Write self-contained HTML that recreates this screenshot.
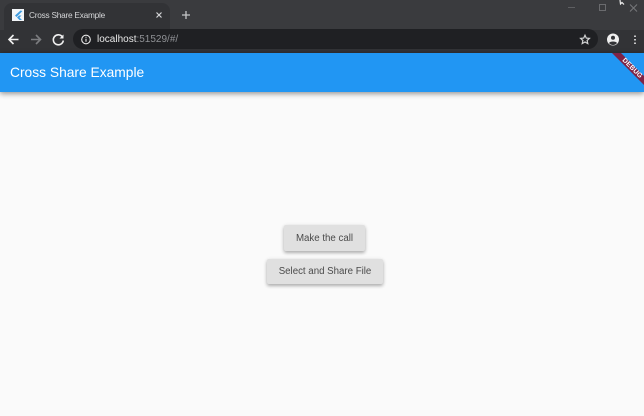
<!DOCTYPE html>
<html><head><meta charset="utf-8">
<style>
html,body{margin:0;padding:0;width:644px;height:416px;overflow:hidden;background:#fafafa;font-family:"Liberation Sans",sans-serif}
.abs{position:absolute}
#top{left:0;top:0;width:644px;height:30px;background:#3a3b3e}
#tab{left:4px;top:3px;width:166px;height:27px;background:#323336;border-radius:8px 8px 0 0}
#bar{left:0;top:30px;width:644px;height:23px;background:#323336}
#url{left:73px;top:29px;width:525px;height:20px;background:#1f2023;border-radius:10px}
#app{left:0;top:53px;width:644px;height:39px;background:#2196f3;box-shadow:0 1px 5px rgba(0,0,0,.34),0 3px 5px rgba(0,0,0,.12)}
.t{position:absolute;white-space:nowrap}
.btn{position:absolute;background:#e0e0e0;border-radius:2px;color:#4a4a4a;font-size:9.7px;text-align:center;box-shadow:0 2px 3px rgba(0,0,0,.24),0 1px 5px rgba(0,0,0,.12)}
</style></head><body>
<div class="abs" id="top"></div>
<div class="abs" id="tab"></div>
<div class="abs" id="bar"></div>
<div class="abs" id="url"></div>
<div class="abs" id="app"></div>
<div class="t" style="left:29px;top:10px;font-size:8.3px;letter-spacing:-.25px;line-height:11px;color:#d5d6d8">Cross Share Example</div>
<div class="t" style="left:97px;top:33.500px;font-size:10px;line-height:12px;color:#e8e8e8">localhost<span style="color:#8f9195">:51529/#/</span></div>
<div class="t" style="left:10px;top:64px;font-size:13.8px;line-height:17px;color:#fff">Cross Share Example</div>
<div class="btn" style="left:284px;top:225px;width:81px;height:26px;line-height:27px">Make the call</div>
<div class="btn" style="left:267px;top:259px;width:116px;height:25px;line-height:26px">Select and Share File</div>
<svg class="abs" style="left:0;top:0" width="644" height="92" viewBox="0 0 644 92">
<rect x="12" y="9" width="12" height="12" fill="#f2f5f8"/>
<path d="M20.500 10.500 15 15.500l1.500 1.500 6-6z M19 15.500l-2 2 2.500 2.500H22l-2.500-2.500 2-2z" fill="#3c9be0"/>
<path d="M156.500 12.500l5 5M161.500 12.500l-5 5" stroke="#d5d6d8" stroke-width="1.200" fill="none"/>
<path d="M186 11v8M182 15h8" stroke="#c4c5c7" stroke-width="1.300" fill="none"/>
<path d="M18.500 39.500H9.500M13.500 35l-4.500 4.500 4.500 4.500" stroke="#f1f1f1" stroke-width="1.600" fill="none"/>
<path d="M31 39.500H40M36 35l4.500 4.500L36 44" stroke="#7c7d80" stroke-width="1.600" fill="none"/>
<path d="M62.500 37a5 5 0 1 0 .8 3.500" stroke="#f1f1f1" stroke-width="1.600" fill="none"/>
<path d="M63.500 34.500v4h-4z" fill="#f1f1f1"/>
<circle cx="86" cy="39.500" r="4.300" stroke="#e8e8e8" stroke-width="1.100" fill="none"/>
<path d="M86 38.800v3M86 36.800v1" stroke="#e8e8e8" stroke-width="1.100"/>
<path d="M585 35.200l1.300 2.900 3.100.3-2.300 2.100.7 3.100-2.800-1.600-2.800 1.600.7-3.100-2.300-2.100 3.100-.3z" fill="none" stroke="#d2d3d4" stroke-width="1.200"/>
<circle cx="613" cy="39.500" r="6" fill="#eeeeee"/>
<circle cx="613" cy="37.700" r="2" fill="#323336"/>
<path d="M609 43c1-2 7-2 8 0a5 5 0 0 1-8 0z" fill="#323336"/>
<path d="M635 35.500v1.500M635 39v1.500M635 42.500v1.500" stroke="#ececec" stroke-width="1.600"/>
<path d="M568 7.500h7" stroke="#5e5f62" stroke-width="1"/>
<rect x="599.500" y="4.500" width="6" height="6" fill="none" stroke="#6a6b6e" stroke-width="1"/>
<path d="M630 4.500l7 7M637 4.500l-7 7" stroke="#76777a" stroke-width="1"/>
<path d="M620 0l.5 4 1.500-1.500 2 2" stroke="#f0f0f0" stroke-width="1.200" fill="none"/>
<polygon points="612,53 621,53 644,76 644,85" fill="#7e2346"/>
<text x="0" y="0" transform="translate(622,60.500) rotate(45)" font-family="Liberation Sans,sans-serif" font-size="6.800" font-weight="700" fill="#fff" letter-spacing=".2">DEBUG</text>
</svg>
</body></html>
